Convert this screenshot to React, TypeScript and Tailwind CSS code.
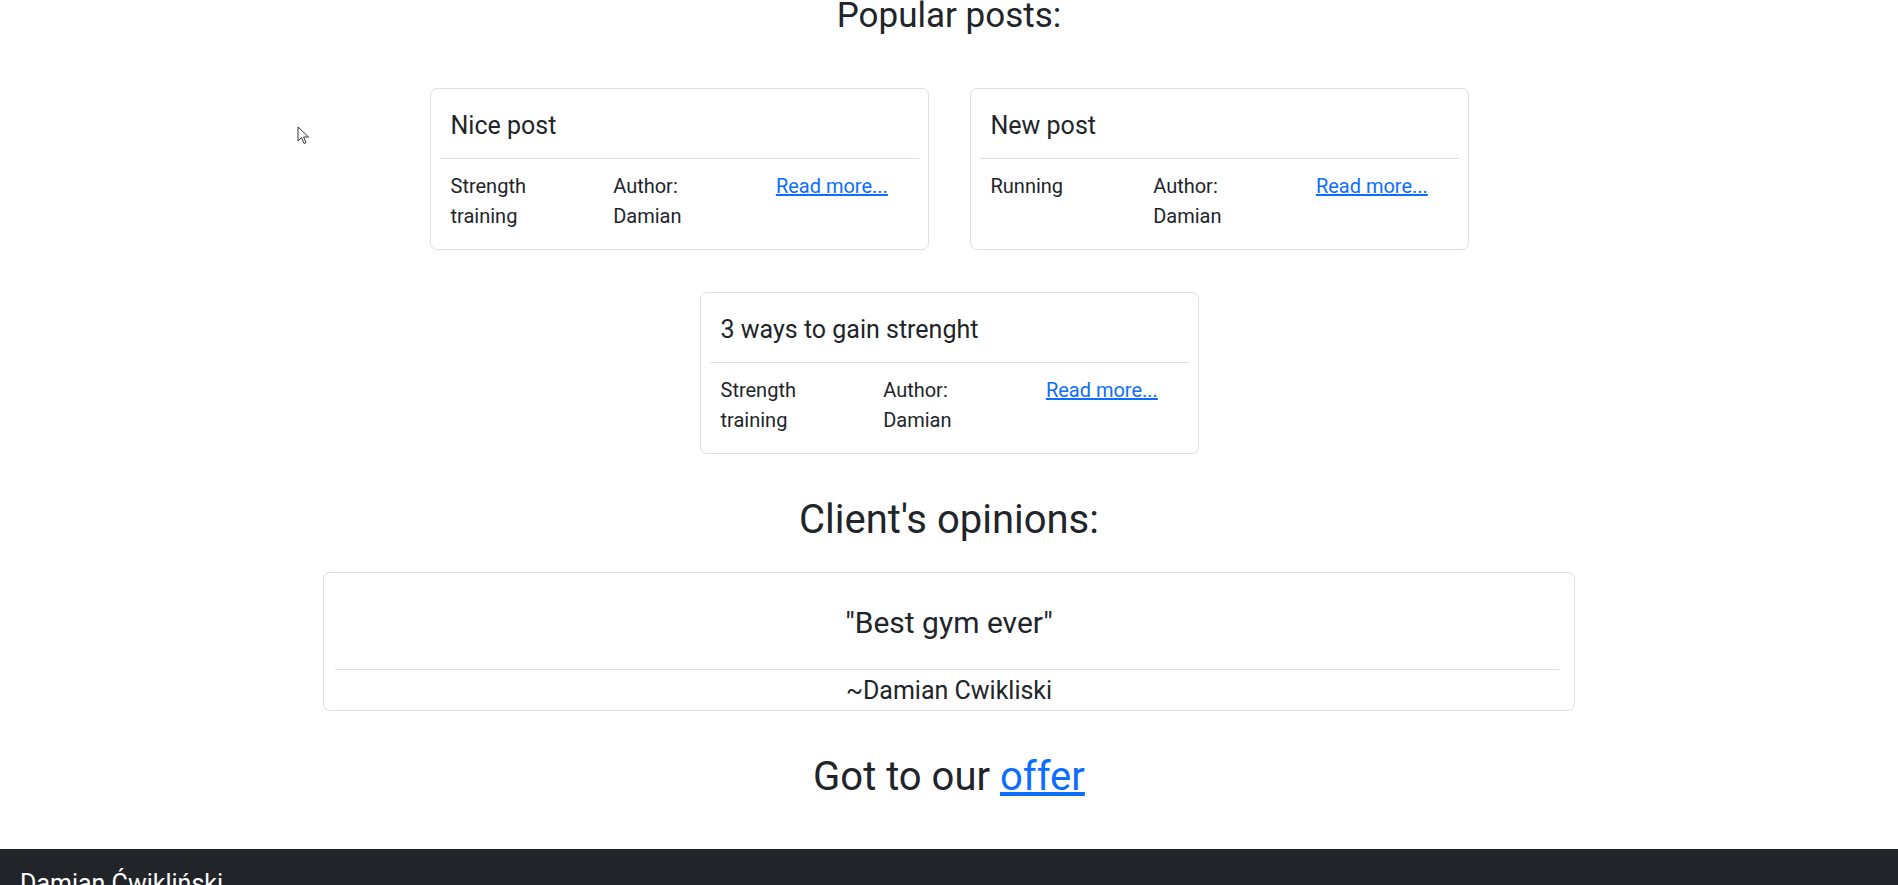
import React from "react";

type Post = { title: string; category: string; author: string };

const posts: Post[] = [
  { title: "Nice post", category: "Strength training", author: "Damian" },
  { title: "New post", category: "Running", author: "Damian" },
  { title: "3 ways to gain strenght", category: "Strength training", author: "Damian" },
];

function PostCard({ post }: { post: Post }) {
  return (
    <div className="w-[499px] rounded-[7px] border border-[#dfdfdf] bg-white">
      <h5 className="px-[20px] pt-[22px] pb-[17px] text-[25px] leading-[30px]">{post.title}</h5>
      <hr className="mx-[9px] border-t border-[#dfdfdf]" />
      <div className="flex px-[5px] pt-[12px] pb-[18px] text-[20px] leading-[30px]">
        <div className="w-[162.7px] shrink-0 px-[15px]">{post.category}</div>
        <div className="w-[162.7px] shrink-0 px-[15px]">Author: {post.author}</div>
        <div className="w-[162.7px] shrink-0 px-[15px]">
          <a href="#" className="text-[#0d6efd] underline">
            Read more...
          </a>
        </div>
      </div>
    </div>
  );
}

export default function App() {
  return (
    <div
      className="relative flex h-[885px] flex-col overflow-hidden bg-white text-[#212529]"
      style={{ fontFamily: 'Roboto, "Noto Sans", sans-serif' }}
    >
      <main className="flex flex-col items-center">
        <h3 className="pt-[2px] text-[35px] leading-[28px]">Popular posts:</h3>

        <div className="mt-[58px] flex justify-center gap-[41px]">
          <PostCard post={posts[0]} />
          <PostCard post={posts[1]} />
        </div>
        <div className="mt-[42px] flex justify-center">
          <PostCard post={posts[2]} />
        </div>

        <h2 className="mt-[42px] text-[40px] leading-[48px]">Client's opinions:</h2>

        <div className="mt-[28px] w-[1252px] rounded-[7px] border border-[#dfdfdf] text-center">
          <h4 className="pt-[32px] pb-[28px] text-[30px] leading-[36px]">"Best gym ever"</h4>
          <hr className="ml-[11px] mr-[15px] border-t border-[#dfdfdf]" />
          <p className="pt-[6px] pb-[4px] text-[25px] leading-[30px]">~Damian Cwikliski</p>
        </div>

        <h2 className="mt-[42px] text-[40px] leading-[48px]">
          Got to our{" "}
          <a href="#" className="text-[#0d6efd] underline">
            offer
          </a>
        </h2>
      </main>

      <footer className="mt-[48px] bg-[#212529] px-[20px] pt-[20px] pb-[20px] text-[25px] leading-[30px] text-white">
        Damian Ćwikliński
      </footer>

      <svg
        className="absolute left-[297px] top-[126px]"
        width="13"
        height="20"
        viewBox="0 0 13 20"
      >
        <path
          d="M1 1 L1 15 L4.5 11.5 L7 17.5 L9 16.7 L6.6 11 L11.5 11 Z"
          fill="white"
          stroke="#333"
          strokeWidth="1"
          strokeLinejoin="round"
        />
      </svg>
    </div>
  );
}
